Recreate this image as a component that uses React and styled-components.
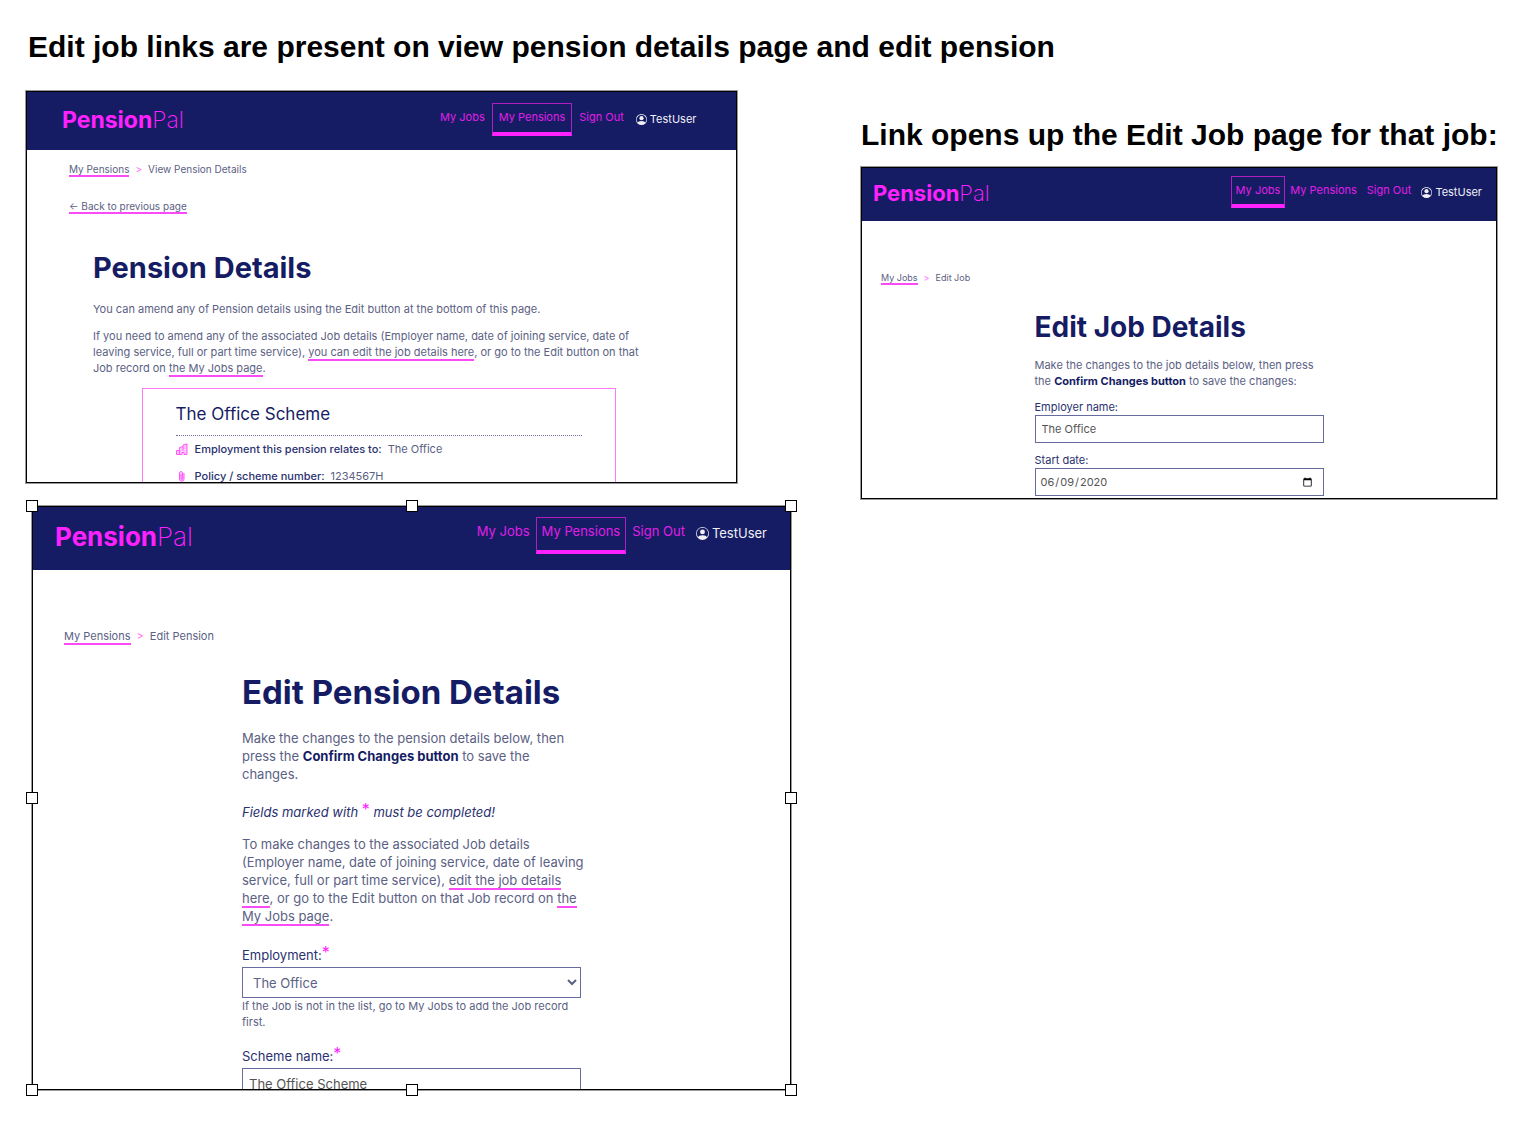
import React from 'react';
import styled, { createGlobalStyle, ThemeProvider } from 'styled-components';
import { BsPersonCircle } from 'react-icons/bs';

const navy = '#151c64';
const magenta = '#ff21ff';

const GlobalStyle = createGlobalStyle`
  *, *::before, *::after { box-sizing: border-box; }
  body { margin: 0; background: #fff; }
  h1, h2, h3, p, dl, dd, ol { margin: 0; padding: 0; }
`;

const detailsSizes = {
  header: 58, inset: 35, end: 40, logo: 23, nav: 11, navTop: 11, navEnd: 7, navSide: 6,
  crumb: 10, text: 11, line: 16, title: 29, titleLine: 34,
};
const pensionSizes = {
  header: 63, inset: 22, end: 23, logo: 26, nav: 13, navTop: 10, navEnd: 11, navSide: 5,
  crumb: 11, text: 13, line: 18, title: 33, titleLine: 38,
  field: 31, labelGap: 3, small: 11,
};
const jobSizes = {
  header: 53, inset: 11, end: 14, logo: 22, nav: 11, navTop: 8, navEnd: 6, navSide: 4,
  crumb: 9, text: 11, line: 16, title: 28, titleLine: 32,
  field: 28, labelGap: 0, small: 10,
};

const Page = styled.main`
  padding: 29px 27px 32px 26px;
`;
const Caption = styled.h2`
  padding-left: ${(p) => p.$indent || 0}px;
  font: 700 30px/36px "Liberation Sans", Arial, sans-serif;
  color: #000;
  white-space: nowrap;
`;
const Columns = styled.div`
  display: grid;
  grid-template-columns: 765fr 636fr;
  gap: 70px;
  margin-top: 26px;
`;
const Column = styled.div`
  display: flex;
  flex-direction: column;
  min-width: 0;
  gap: ${(p) => p.$gap}px;
  padding-top: ${(p) => p.$top || 0}px;
`;
const Shot = styled.section`
  width: ${(p) => p.$width || '100%'};
  height: ${(p) => p.$height}px;
  overflow: hidden;
  border: 1px solid #000;
  outline: 1px solid rgba(0, 0, 0, 0.4);
  background: #fff;
  color: #5b6184;
  font-family: Inter, "Open Sans", sans-serif;
  font-size: ${(p) => p.theme.text}px;
  line-height: ${(p) => p.theme.line}px;
`;
const Selection = styled.div`
  position: relative;
  margin-left: 6px;
`;
const Handle = styled.span`
  position: absolute;
  left: ${(p) => p.$x};
  top: ${(p) => p.$y};
  width: 12px;
  height: 12px;
  margin: -6px;
  border: 1px solid #000;
  background: #fff;
`;

const Header = styled.header`
  display: flex;
  justify-content: space-between;
  height: ${(p) => p.theme.header}px;
  padding: 0 ${(p) => p.theme.end}px 0 ${(p) => p.theme.inset}px;
  background: ${navy};
`;
const Logo = styled.a`
  align-self: center;
  padding-bottom: 3px;
  color: ${magenta};
  font-size: ${(p) => p.theme.logo}px;
  font-weight: 200;
  line-height: 30px;
  text-decoration: none;
  b { font-weight: 700; }
`;
const Nav = styled.nav`
  display: flex;
  align-items: flex-start;
  padding-top: ${(p) => p.theme.navTop}px;
  font-size: ${(p) => p.theme.nav}px;
  line-height: 16px;
`;
const NavLink = styled.a`
  padding: 5px ${(p) => p.theme.navSide}px ${(p) => p.theme.navEnd}px;
  border: 1px solid ${(p) => (p.$active ? '#b01dc0' : 'transparent')};
  border-bottom: 4px solid ${(p) => (p.$active ? magenta : 'transparent')};
  color: #e01fe6;
  text-decoration: none;
  white-space: nowrap;
`;
const User = styled.span`
  display: flex;
  align-items: center;
  gap: 3px;
  padding: 8px 0 0 5px;
  color: #f0f0f6;
`;

const A = styled.a`
  color: inherit;
  text-decoration: none;
  border-bottom: 2px solid #fb4bf6;
`;
const Crumbs = styled.nav`
  display: flex;
  gap: 6px;
  padding: ${(p) => p.$top}px 0 0 ${(p) => p.$left}px;
  font-size: ${(p) => p.theme.crumb}px;
`;
const Chevron = styled.span`
  color: #ff6cf8;
`;
const Back = styled.p`
  padding: 21px 0 0 42px;
  font-size: ${(p) => p.theme.crumb}px;
`;
const Content = styled.div`
  padding: 37px 72px 0 66px;
`;
const Title = styled.h1`
  color: ${navy};
  font-size: ${(p) => p.theme.title}px;
  line-height: ${(p) => p.theme.titleLine}px;
  font-weight: 700;
  white-space: nowrap;
`;
const Text = styled.p`
  width: ${(p) => (p.$width ? `${p.$width}px` : 'auto')};
  margin-top: ${(p) => p.$top}px;
`;
const Strong = styled.strong`
  color: ${navy};
  font-weight: 700;
`;
const Note = styled.p`
  margin-top: 20px;
  color: #2a3170;
  font-style: italic;
`;
const Star = styled.sup`
  color: ${magenta};
  font-size: 16px;
  font-style: normal;
  line-height: 0;
  vertical-align: 2px;
`;
const Card = styled.article`
  width: 83%;
  margin: 12px auto 0;
  padding: 13px 33px 24px;
  border: 1px solid #fb7bf6;
`;
const CardTitle = styled.h3`
  padding-bottom: 9px;
  border-bottom: 1px dotted #6a6f9f;
  color: ${navy};
  font-size: 17px;
  line-height: 24px;
  font-weight: 400;
`;
const Facts = styled.dl`
  display: grid;
  gap: 11px;
  padding-top: 5px;
`;
const Fact = styled.div`
  display: flex;
  align-items: center;
  svg { width: 12px; height: 12px; margin-right: 7px; }
  dt { color: #2a3170; margin-right: 6px; font-weight: 500; }
`;
const Form = styled.form`
  width: ${(p) => p.$width}px;
  max-width: 100%;
  margin: ${(p) => p.$top}px auto 0;
`;
const Field = styled.div`
  display: flex;
  flex-direction: column;
  margin-top: ${(p) => p.$top}px;
`;
const Label = styled.label`
  margin-bottom: ${(p) => p.theme.labelGap}px;
  color: #2a3170;
`;
const Input = styled.input`
  width: 100%;
  height: ${(p) => p.theme.field}px;
  padding: 0 8px 0 6px;
  border: 1px solid #676c9f;
  border-radius: 0;
  background: #fff;
  color: #555;
  font: inherit;
`;
const DateInput = styled(Input)`
  padding-left: 4px;
`;
const Select = styled.select`
  width: 100%;
  height: ${(p) => p.theme.field}px;
  padding: 0 0 0 6px;
  border: 1px solid #676c9f;
  border-radius: 0;
  background: #fff;
  color: #5b6184;
  font: inherit;
`;
const Help = styled.small`
  font-size: ${(p) => p.theme.small}px;
  line-height: 16px;
`;

const BuildingIcon = () => (
  <svg viewBox="0 0 12 12" fill="#ffc4fc" stroke="#fb5bf6" aria-hidden="true">
    <path d="M.5 11.5V7.5h3V4.500l3.500-1V2l4-1v10.500h-3V9.500h-2v2zM3.500 7v4M7 3.500v4" />
  </svg>
);
const ClipIcon = () => (
  <svg viewBox="0 0 12 12" fill="#ffc4fc" stroke="#fb5bf6" aria-hidden="true">
    <path d="M8 3v6a2 2 0 0 1-4.500 0V2.500a1.700 1.700 0 0 1 3 0V9a.8.8 0 0 1-1.500 0V4" />
  </svg>
);

const links = ['My Jobs', 'My Pensions', 'Sign Out'];
const SiteHeader = ({ active }) => (
  <Header>
    <Logo href="#home"><b>Pension</b>Pal</Logo>
    <Nav>
      {links.map((name) => (
        <NavLink href="#nav" key={name} $active={name === active}>{name}</NavLink>
      ))}
      <User><BsPersonCircle />TestUser</User>
    </Nav>
  </Header>
);
const Trail = ({ parent, page, top, left }) => (
  <Crumbs $top={top} $left={left}>
    <span><A href="#parent">{parent}</A></span><Chevron>&gt;</Chevron><span>{page}</span>
  </Crumbs>
);

const PensionView = () => (
  <ThemeProvider theme={detailsSizes}>
    <Shot $width="93%" $height={392}>
      <SiteHeader active="My Pensions" />
      <Trail parent="My Pensions" page="View Pension Details" top={11} left={42} />
      <Back><A href="#back">← Back to previous page</A></Back>
      <Content>
        <Title>Pension Details</Title>
        <Text $top={16}>You can amend any of Pension details using the Edit button at the bottom of this page.</Text>
        <Text $top={11} $width={560}>
          If you need to amend any of the associated Job details (Employer name, date of joining service, date of
          leaving service, full or part time service), <A href="#job">you can edit the job details here</A>, or go to
          the Edit button on that Job record on <A href="#jobs">the My Jobs page</A>.
        </Text>
        <Card>
          <CardTitle>The Office Scheme</CardTitle>
          <Facts>
            <Fact><BuildingIcon /><dt>Employment this pension relates to:</dt><dd>The Office</dd></Fact>
            <Fact><ClipIcon /><dt>Policy / scheme number:</dt><dd>1234567H</dd></Fact>
          </Facts>
        </Card>
      </Content>
    </Shot>
  </ThemeProvider>
);

const handles = [
  ['0', '0'], ['50%', '0'], ['100%', '0'], ['0', '50%'],
  ['100%', '50%'], ['0', '100%'], ['50%', '100%'], ['100%', '100%'],
];
const PensionEdit = () => (
  <ThemeProvider theme={pensionSizes}>
    <Selection>
      <Shot $height={584}>
        <SiteHeader active="My Pensions" />
        <Trail parent="My Pensions" page="Edit Pension" top={57} left={31} />
        <Form $width={339} $top={28}>
          <Title>Edit Pension Details</Title>
          <Text $top={18}>
            Make the changes to the pension details below, then press the <Strong>Confirm Changes button</Strong> to
            save the changes.
          </Text>
          <Note>Fields marked with <Star>*</Star> must be completed!</Note>
          <Text $top={14} $width={348}>
            To make changes to the associated Job details (Employer name, date of joining service, date of leaving
            service, full or part time service), <A href="#job">edit the job details here</A>, or go to the Edit
            button on that Job record on <A href="#jobs">the My Jobs page</A>.
          </Text>
          <Field $top={21}>
            <Label htmlFor="employment">Employment:<Star>*</Star></Label>
            <Select id="employment"><option>The Office</option></Select>
            <Help>If the Job is not in the list, go to My Jobs to add the Job record first.</Help>
          </Field>
          <Field $top={17}>
            <Label htmlFor="scheme">Scheme name:<Star>*</Star></Label>
            <Input id="scheme" defaultValue="The Office Scheme" />
          </Field>
        </Form>
      </Shot>
      {handles.map(([x, y]) => <Handle key={x + y} $x={x} $y={y} />)}
    </Selection>
  </ThemeProvider>
);

const JobEdit = () => (
  <ThemeProvider theme={jobSizes}>
    <Shot $height={332}>
      <SiteHeader active="My Jobs" />
      <Trail parent="My Jobs" page="Edit Job" top={49} left={19} />
      <Form $width={289} $top={25}>
        <Title>Edit Job Details</Title>
        <Text $top={14}>
          Make the changes to the job details below, then press the <Strong>Confirm Changes button</Strong> to save
          the changes:
        </Text>
        <Field $top={10}>
          <Label htmlFor="employer">Employer name:</Label>
          <Input id="employer" defaultValue="The Office" />
        </Field>
        <Field $top={9}>
          <Label htmlFor="start">Start date:</Label>
          <DateInput id="start" type="date" defaultValue="2020-06-09" />
        </Field>
      </Form>
    </Shot>
  </ThemeProvider>
);

export default function App() {
  return (
    <Page>
      <GlobalStyle />
      <Caption $indent={2}>Edit job links are present on view pension details page and edit pension</Caption>
      <Columns>
        <Column $gap={23}>
          <PensionView />
          <PensionEdit />
        </Column>
        <Column $gap={14} $top={26}>
          <Caption>Link opens up the Edit Job page for that job:</Caption>
          <JobEdit />
        </Column>
      </Columns>
    </Page>
  );
}
